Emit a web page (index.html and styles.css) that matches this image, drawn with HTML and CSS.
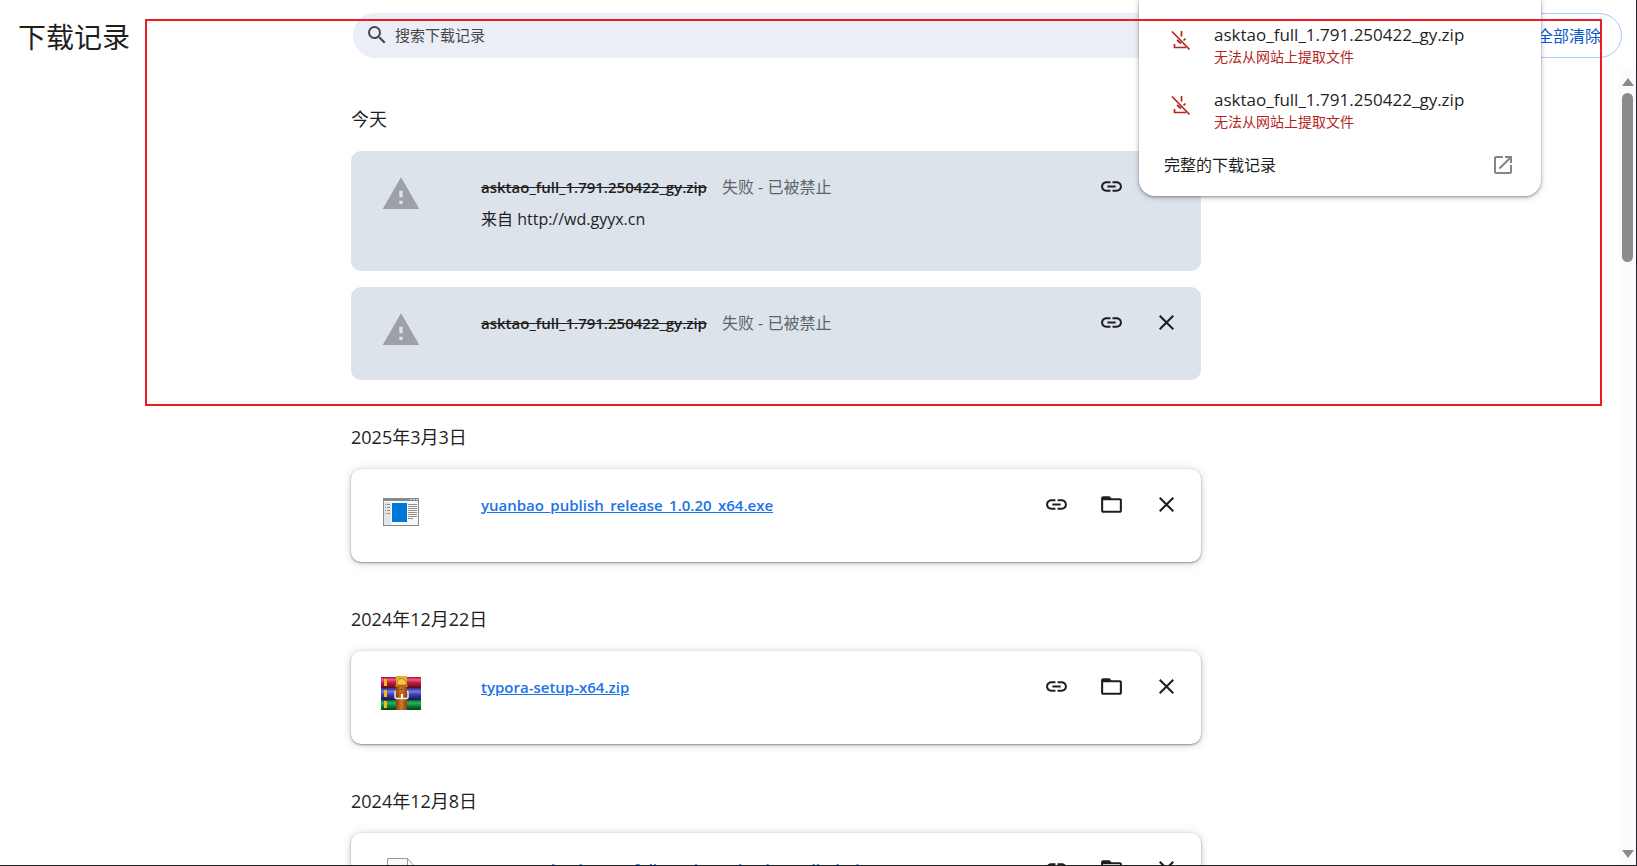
FILE: index.html
```html
<!DOCTYPE html>
<html lang="zh-CN">
<head>
<meta charset="utf-8">
<title>下载记录</title>
<link rel="stylesheet" href="styles.css">
</head>
<body>
<svg class="defs" aria-hidden="true">
  <symbol id="link" viewBox="0 0 24 24"><path d="M3.9 12c0-1.710 1.390-3.100 3.100-3.100h4V7H7c-2.760 0-5 2.240-5 5s2.240 5 5 5h4v-1.900H7c-1.710 0-3.100-1.390-3.100-3.100zM8 13h8v-2H8v2zm9-6h-4v1.900h4c1.710 0 3.100 1.390 3.100 3.100s-1.390 3.100-3.100 3.100h-4V17h4c2.760 0 5-2.240 5-5s-2.240-5-5-5z"/></symbol>
  <symbol id="folder" viewBox="0 0 24 24"><path d="M4 4h6l2 2h8c1.100 0 2 .900 2 2v10c0 1.100-.900 2-2 2H4c-1.100 0-2-.900-2-2V6c0-1.100.900-2 2-2zm0 4v10h16V8z"/></symbol>
  <symbol id="close" viewBox="0 0 24 24"><path d="M5.500 5.500l13 13M18.500 5.500l-13 13" fill="none" stroke="currentColor" stroke-width="2"/></symbol>
  <symbol id="warn" viewBox="0 0 24 24"><path d="M1 21h22L12 2 1 21zm12-3h-2v-2h2v2zm0-4h-2v-4h2v4z"/></symbol>
  <symbol id="nodl" viewBox="0 0 24 24"><path d="M3 3.500L20.500 21.500M12.500 3v5.500M5.500 16V19.500H17M16.500 10.500l-2 2M8 12l4 3.500" fill="none" stroke="currentColor" stroke-width="1.700"/></symbol>
</svg>
<div class="page">
  <header class="top">
    <h1 class="title">下载记录</h1>
    <label class="search">
      <svg class="search-icon" viewBox="0 0 24 24" aria-hidden="true"><path d="M15.500 14h-.790l-.280-.270A6.470 6.470 0 0 0 16 9.500 6.500 6.500 0 1 0 9.500 16c1.610 0 3.090-.590 4.230-1.570l.270.280v.790l5 4.990L20.490 19l-4.990-5zm-6 0C7.010 14 5 11.990 5 9.500S7.010 5 9.500 5 14 7.010 14 9.500 11.990 14 9.500 14z"/></svg>
      <input class="search-input" type="text" placeholder="搜索下载记录" aria-label="搜索下载记录">
    </label>
    <button class="clear" type="button">全部清除</button>
  </header>
  <div class="body">
    <main class="list">
      <section class="group">
        <h2 class="date">今天</h2>
        <article class="card blocked">
          <svg class="file-icon"><use href="#warn"/></svg>
          <div class="info">
            <p class="line"><s class="name">asktao_full_1.791.250422_gy.zip</s><span class="status">失败 - 已被禁止</span></p>
            <p class="line source">来自 http://wd.gyyx.cn</p>
          </div>
          <div class="actions">
            <button class="act" type="button" aria-label="复制链接"><svg><use href="#link"/></svg></button>
            <button class="act" type="button" aria-label="移除"><svg><use href="#close"/></svg></button>
          </div>
        </article>
        <article class="card blocked">
          <svg class="file-icon"><use href="#warn"/></svg>
          <div class="info">
            <p class="line"><s class="name">asktao_full_1.791.250422_gy.zip</s><span class="status">失败 - 已被禁止</span></p>
          </div>
          <div class="actions">
            <button class="act" type="button" aria-label="复制链接"><svg><use href="#link"/></svg></button>
            <button class="act" type="button" aria-label="移除"><svg><use href="#close"/></svg></button>
          </div>
        </article>
      </section>
      <section class="group">
        <h2 class="date">2025年3月3日</h2>
        <article class="card">
          <svg class="file-icon" viewBox="0 0 40 40">
            <path d="M2 6h36v28H2z" fill="#868a8e"/><path d="M3 9h34v24H3z" fill="#f7f7f7"/><path d="M3 10h7v23H3z" fill="#e4e4e4"/>
            <path d="M11 11h15v19H11z" fill="#0078d7"/>
            <path d="M29 7h2v1h-2zM32 7h2v1h-2zM35 7h2v1h-2z" fill="#dadada"/>
            <path d="M4 12h1v1H4zm2 0h3v1H6zM4 15h1v1H4zm2 0h3v1H6zM4 18h1v1H4zm2 0h3v1H6zM4 21h1v1H4zm2 0h3v1H6zM27 12h9v1h-9zm0 2h9v1h-9zm0 2h9v1h-9zm0 2h9v1h-9zm0 2h9v1h-9zm0 2h9v1h-9zm0 2h9v1h-9zm0 2h5v1h-5z" fill="#8f8f8f"/>
          </svg>
          <div class="info"><p class="line"><a class="name" href="#">yuanbao_publish_release_1.0.20_x64.exe</a></p></div>
          <div class="actions">
            <button class="act" type="button" aria-label="复制链接"><svg><use href="#link"/></svg></button>
            <button class="act" type="button" aria-label="在文件夹中显示"><svg><use href="#folder"/></svg></button>
            <button class="act" type="button" aria-label="移除"><svg><use href="#close"/></svg></button>
          </div>
        </article>
      </section>
      <section class="group">
        <h2 class="date">2024年12月22日</h2>
        <article class="card">
          <svg class="file-icon" viewBox="0 2 40 40">
            <defs>
              <linearGradient id="r" x2="0" y2="1"><stop offset="0" stop-color="#a31336"/><stop offset=".25" stop-color="#ee5b86"/><stop offset=".5" stop-color="#c01f45"/><stop offset="1" stop-color="#5b0818"/></linearGradient>
              <linearGradient id="b" x2="0" y2="1"><stop offset="0" stop-color="#302c88"/><stop offset=".3" stop-color="#7676e2"/><stop offset=".55" stop-color="#3d3cae"/><stop offset="1" stop-color="#17154e"/></linearGradient>
              <linearGradient id="g" x2="0" y2="1"><stop offset="0" stop-color="#07672a"/><stop offset=".3" stop-color="#24b95a"/><stop offset=".55" stop-color="#0e8a38"/><stop offset="1" stop-color="#053c17"/></linearGradient>
              <linearGradient id="s" x2="1" y2="0"><stop offset="0" stop-color="#8b3f0c"/><stop offset=".5" stop-color="#d07a2c"/><stop offset="1" stop-color="#8b3f0c"/></linearGradient>
            </defs>
            <path d="M0 5h40v11H0z" fill="url(#r)"/><path d="M0 16h40v12H0z" fill="url(#b)"/><path d="M0 28h40v10H0z" fill="url(#g)"/>
            <path d="M3 7h3v7H3zM3 18h3v7H3zM3 29h3v7H3z" fill="#f5b81d"/>
            <path d="M15 14h11v24H15z" fill="url(#s)"/>
            <path d="M15 4h11v10H15z" fill="#e3b02b"/><path d="M16 13V9q4.500-5 9 0v4z" fill="#f0c94b" stroke="#c08618"/>
            <path d="M14 13h13v2H14z" fill="#b56a15"/>
            <path d="M18 19h5v5h-5z" fill="#c2691c"/>
            <path d="M15 19l-1 1v5q0 1.500 1.500 1.500h10q1.500 0 1.500-1.500v-5l-1-1" fill="none" stroke="#ececec" stroke-width="1.500"/><path d="M20 22h2v5h-2z" fill="#fff"/><path d="M20 17h1v1h-1z" fill="#401800"/>
          </svg>
          <div class="info"><p class="line"><a class="name" href="#">typora-setup-x64.zip</a></p></div>
          <div class="actions">
            <button class="act" type="button" aria-label="复制链接"><svg><use href="#link"/></svg></button>
            <button class="act" type="button" aria-label="在文件夹中显示"><svg><use href="#folder"/></svg></button>
            <button class="act" type="button" aria-label="移除"><svg><use href="#close"/></svg></button>
          </div>
        </article>
      </section>
      <section class="group">
        <h2 class="date">2024年12月8日</h2>
        <article class="card">
          <svg class="file-icon" viewBox="0 0 40 40"><path d="M6.500 2.500h20l7 8v27h-27zM26.500 2.500v8h7" fill="#fafafa" stroke="#999"/></svg>
          <div class="info"><p class="line"><a class="name" href="#">compass_book_repo_full_version_e_book_resell_ok.zip</a></p></div>
          <div class="actions">
            <button class="act" type="button" aria-label="复制链接"><svg><use href="#link"/></svg></button>
            <button class="act" type="button" aria-label="在文件夹中显示"><svg><use href="#folder"/></svg></button>
            <button class="act" type="button" aria-label="移除"><svg><use href="#close"/></svg></button>
          </div>
        </article>
      </section>
    </main>
    <div class="scrollbar" aria-hidden="true">
      <svg class="arrow" viewBox="0 0 12 8"><path d="M0 8l6-8 6 8z"/></svg>
      <div class="thumb"></div>
      <svg class="arrow" viewBox="0 0 12 8"><path d="M0 0l6 8 6-8z"/></svg>
    </div>
  </div>
  <aside class="popup">
    <div class="pop-item">
      <svg class="pop-icon"><use href="#nodl"/></svg>
      <div><p class="pop-name">asktao_full_1.791.250422_gy.zip</p><p class="pop-error">无法从网站上提取文件</p></div>
    </div>
    <div class="pop-item">
      <svg class="pop-icon"><use href="#nodl"/></svg>
      <div><p class="pop-name">asktao_full_1.791.250422_gy.zip</p><p class="pop-error">无法从网站上提取文件</p></div>
    </div>
    <button class="pop-all" type="button">完整的下载记录
      <svg class="open-icon" viewBox="0 0 24 24" aria-hidden="true"><path d="M19 19H5V5h7V3H5a2 2 0 0 0-2 2v14a2 2 0 0 0 2 2h14c1.100 0 2-.900 2-2v-7h-2v7zM14 3v2h3.590l-9.830 9.830 1.410 1.410L19 6.410V10h2V3h-7z"/></svg>
    </button>
  </aside>
  <div class="marker"></div>
</div>
</body>
</html>
```
FILE: styles.css
```css
* { box-sizing: border-box; }
body, h1, h2, p { margin: 0; font-weight: 400; }
body {
  font: 15px/24px "Open Sans", "Noto Sans CJK SC", sans-serif;
  color: #1f1f1f;
  background: #fff;
}
button, input { font: inherit; color: inherit; border: 0; background: none; padding: 0; }
svg { display: block; fill: currentColor; }
.defs { position: absolute; width: 0; height: 0; }
.page {
  position: relative;
  display: flex;
  flex-direction: column;
  height: 100vh;
  overflow: hidden;
  border: solid #202124;
  border-width: 0 1px 1px 0;
}
.top {
  display: flex;
  align-items: center;
  height: 70px;
  padding: 0 14px 0 18px;
  flex: none;
}
.title { flex: 0 0 335px; padding-top: 4px; font-size: 28px; line-height: 40px; }
.search {
  display: flex;
  align-items: center;
  gap: 6px;
  flex: 0 1 850px;
  height: 45px;
  padding: 0 12px;
  border-radius: 23px;
  background: #ebeef7;
  color: #474747;
}
.search-icon { width: 24px; height: 24px; }
.search-input { flex: 1; outline: 0; }
.search-input::placeholder { color: #474747; opacity: 1; }
.clear {
  margin-left: auto;
  height: 45px;
  padding: 2px 20px 0 48px;
  border: 1px solid #a8c7fa;
  border-radius: 23px;
  color: #0b57d0;
  font-size: 16px;
}
.body { display: flex; flex: 1; min-height: 0; }
.list { flex: 1; min-width: 0; overflow: hidden; padding: 37px 24px 0 351px; }
.group { max-width: 850px; margin-bottom: 45px; }
.date { font-size: 18px; line-height: 24px; margin-bottom: 20px; }
.card {
  display: flex;
  min-height: 93px;
  padding: 15px 15px 30px 30px;
  border-radius: 10px;
  background: #fff;
  box-shadow: 0 1px 2px rgba(60, 64, 67, .5), 0 1px 8px rgba(60, 64, 67, .25);
}
.card + .card { margin-top: 16px; }
.blocked { background: #dce3eb; box-shadow: none; }
.file-icon { flex: none; width: 40px; height: 40px; margin-top: 8px; }
.blocked .file-icon { color: #9da1a5; }
.info { flex: 1; margin-left: 60px; padding: 9px 0 10px; display: grid; gap: 8px; align-content: start; white-space: nowrap; }
.name { font-weight: 600; margin-right: 15px; }
a.name { color: #1a73e8; }
.status { color: #5f6368; font-size: 16px; }
.line { height: 24px; }
.source { font-size: 16px; }
.actions { display: flex; gap: 15px; }
.act { display: grid; place-items: center; width: 40px; height: 40px; }
.act svg { width: 25px; height: 25px; }
.scrollbar {
  display: flex;
  flex-direction: column;
  align-items: center;
  width: 17px;
  padding: 8px 0 7px;
  background: #fbfbfb;
  color: #8b8b8b;
}
.arrow { width: 12px; height: 8px; }
.thumb { width: 11px; height: 169px; margin: 7px 0 auto; border-radius: 6px; background: #8b8b8b; }
.popup {
  position: absolute;
  top: 0;
  right: 95px;
  width: 402px;
  padding: 24px 26px 20px 25px;
  border-radius: 0 0 16px 16px;
  background: #fff;
  box-shadow: 0 1px 3px rgba(60, 64, 67, .5), 0 2px 6px rgba(60, 64, 67, .2);
}
.pop-item { display: flex; gap: 21px; height: 65px; padding-left: 5px; }
.pop-icon { width: 24px; height: 24px; margin-top: 4px; color: #b3261e; }
.pop-name { font-size: 17px; line-height: 22px; }
.pop-error { font-size: 14px; line-height: 22px; color: #b3261e; }
.pop-all { display: flex; justify-content: space-between; align-items: center; width: 100%; height: 22px; font-size: 16px; line-height: 22px; }
.open-icon { width: 24px; height: 24px; color: #80868b; }
.marker {
  position: absolute;
  top: 19px;
  left: 145px;
  right: 34px;
  height: 387px;
  border: 2px solid #ed1c24;
  pointer-events: none;
}
```
